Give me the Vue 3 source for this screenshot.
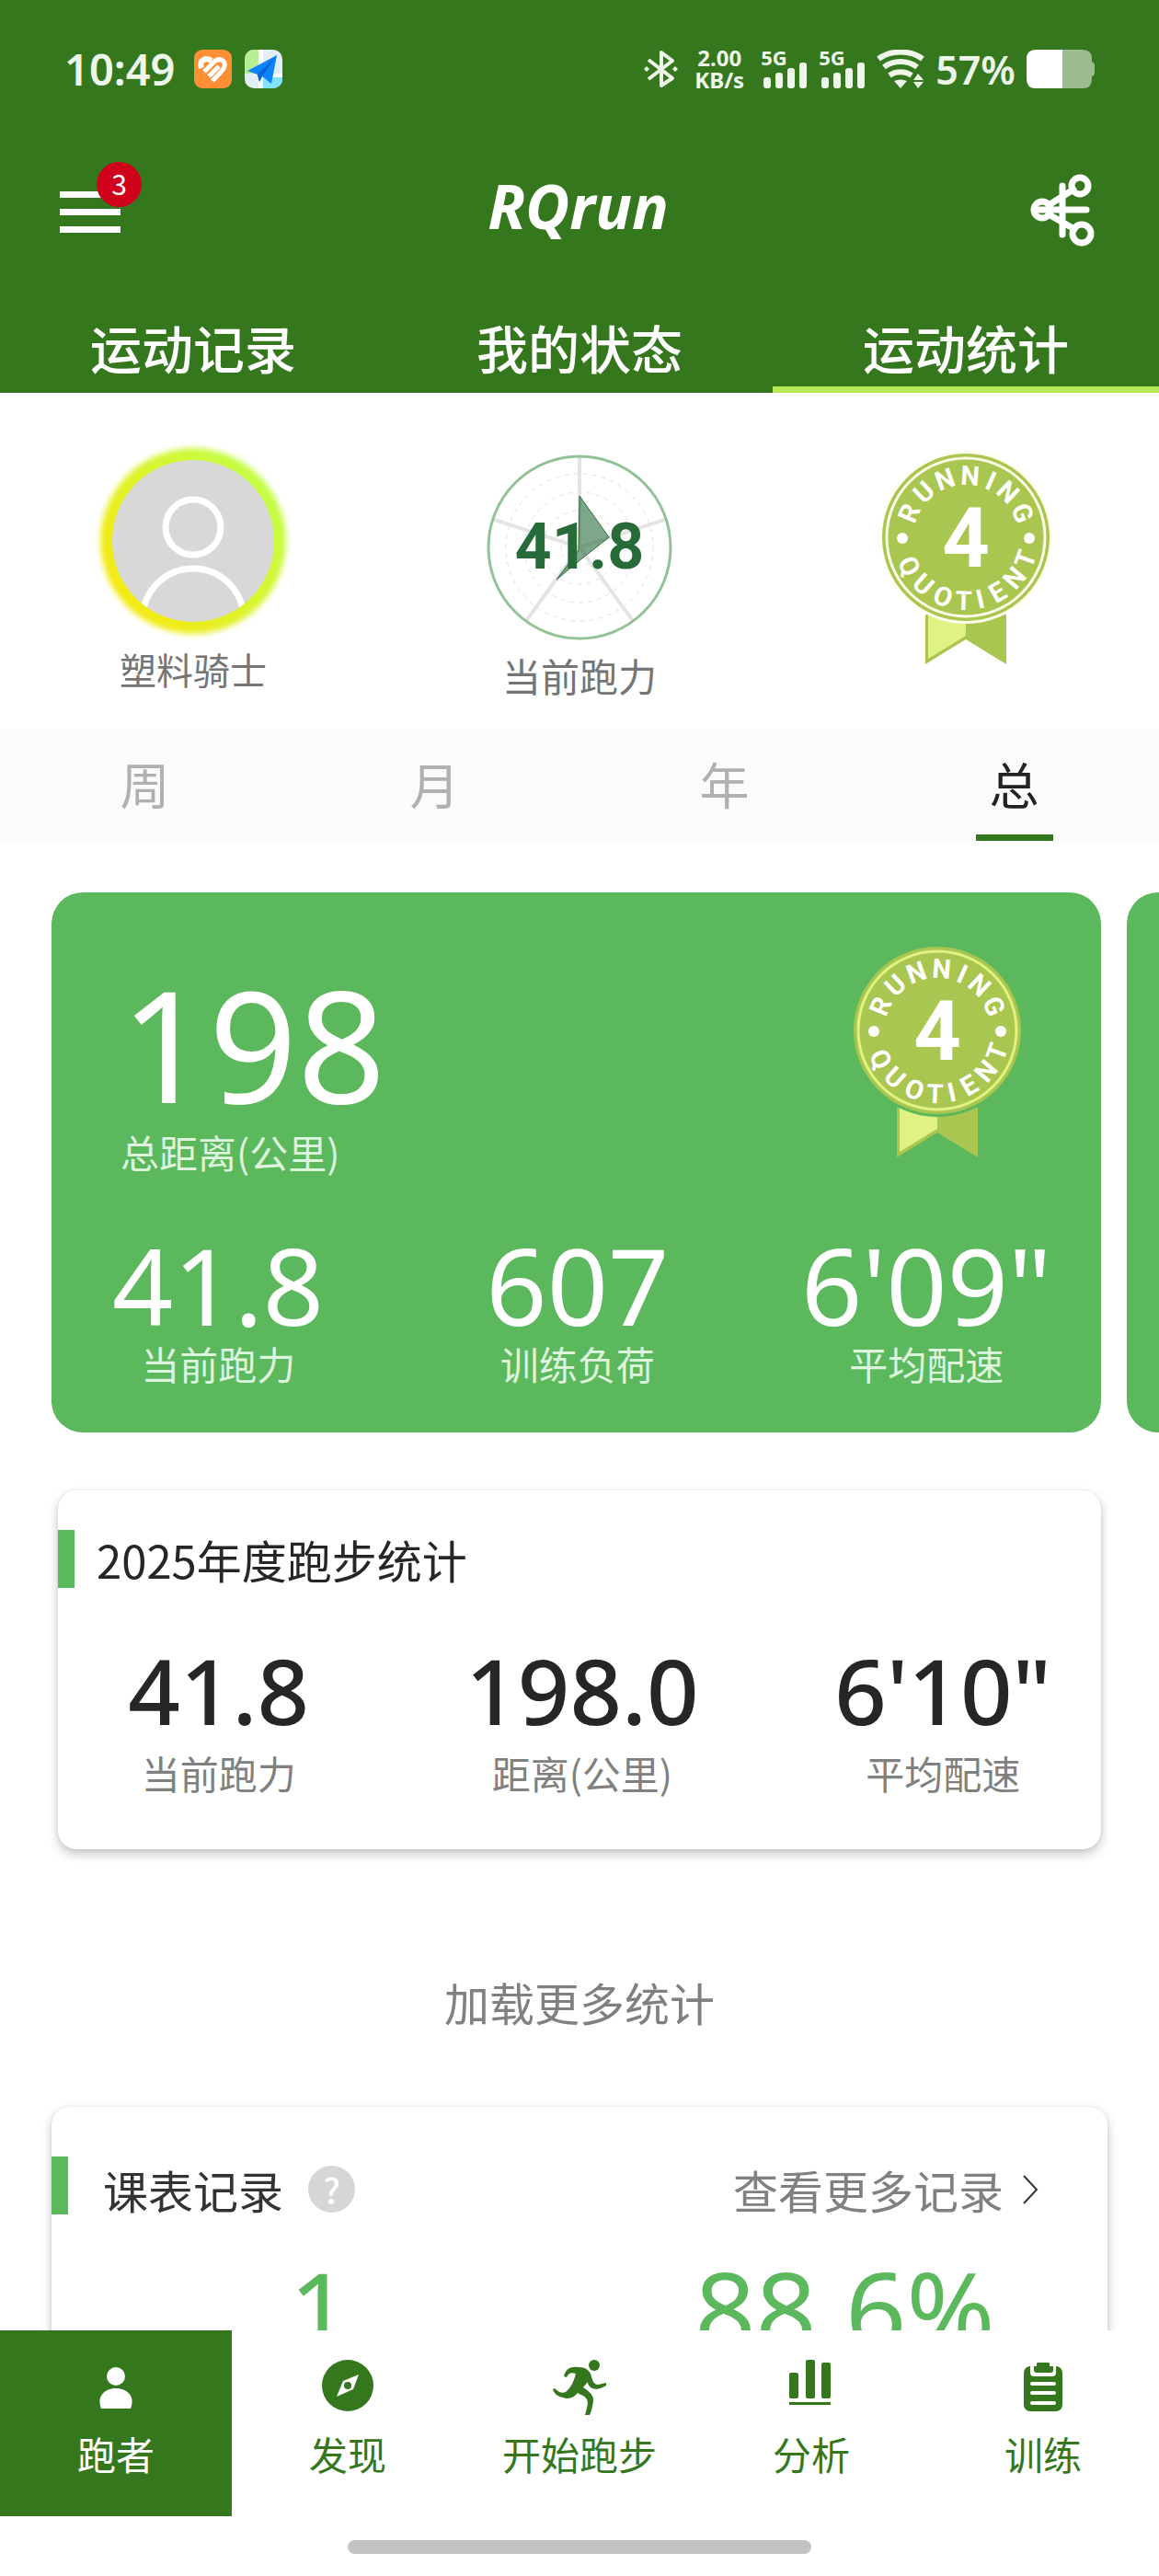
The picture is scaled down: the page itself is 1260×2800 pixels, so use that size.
<template>
  <div class="app">
    <header class="header">
      <div class="status-bar">
        <span class="clock">10:49</span>
        <svg class="app-icon" width="41" height="42" viewBox="0 0 41 42">
          <rect width="41" height="42" rx="9" fill="#ff8f34" />
          <g fill="none" stroke="#fff" stroke-width="5" stroke-linecap="butt">
            <path d="M8 20C5 11 13 8 19 12" stroke-width="6" />
            <path d="M11 24L22 13C27 8 35 12 33 18C32 23 25 28 20 34" />
            <path d="M16 29L27 18" />
          </g>
        </svg>
        <svg class="app-icon" width="41" height="42" viewBox="0 0 41 42">
          <clipPath id="mapClip"><rect width="41" height="42" rx="10" /></clipPath>
          <g clip-path="url(#mapClip)">
            <rect width="41" height="42" fill="#e1eef2" />
            <rect width="15" height="26" fill="#b8ee92" />
            <rect x="20" y="30" width="21" height="12" fill="#83e2fb" />
            <path d="M15 0h5v42h-5zM20 26h21v4H20z" fill="#fff" />
            <path d="M3 23L35 6L29 37L19 29L16 35L14 27Z" fill="#0b84fb" />
            <path d="M14 27L35 6L19 29L16 35Z" fill="#0863d6" />
          </g>
        </svg>
        <div class="status-right">
          <svg width="37" height="42" viewBox="0 0 37 42">
            <path d="M5 11L31 31L19 39V3L31 12L5 32" fill="none" stroke="#eef6ea" stroke-width="4" stroke-linejoin="round" />
            <path d="M3 18l3 3l-3 3l-3 -3zM34 18l3 3l-3 3l-3 -3z" fill="#eef6ea" />
          </svg>
          <div class="speed"><span>2.00</span><span>KB/s</span></div>
          <div v-for="n in 2" :key="n" class="signal">
            <span>5G</span>
            <svg width="48" height="28" viewBox="0 0 48 28" fill="#eef6ea">
              <rect x="0" y="16" width="8" height="12" rx="3" />
              <rect x="13" y="11" width="8" height="17" rx="3" />
              <rect x="26" y="6" width="8" height="22" rx="3" />
              <rect x="39" y="0" width="8" height="28" rx="3" />
            </svg>
          </div>
          <svg width="52" height="42" viewBox="0 0 52 42">
            <g fill="none" stroke="#eef6ea" stroke-width="6">
              <path d="M2 10C15 0 37 0 50 10" />
              <path d="M8 19C18 11 34 11 44 19" />
              <path d="M14 28C21 23 31 23 38 28" />
            </g>
            <path d="M19 34Q26 31 33 34L26 42ZM40 33L45 26L51 33ZM40 35H51L45 42Z" fill="#eef6ea" />
          </svg>
          <span class="percent">57%</span>
          <svg width="74" height="42" viewBox="0 0 74 42">
            <path d="M39 0H61Q71 0 71 10V13Q74 14 74 17V25Q74 28 71 29V32Q71 42 61 42H39Z" fill="#9dbd90" />
            <path d="M10 0H39V42H10Q0 42 0 32V10Q0 0 10 0Z" fill="#fff" />
          </svg>
        </div>
      </div>

      <div class="title-bar">
        <button class="menu" aria-label="菜单">
          <i></i><i></i><i></i>
          <span class="badge">3</span>
        </button>
        <h1>RQrun</h1>
        <button class="share" aria-label="分享">
          <svg width="74" height="82" viewBox="1118 192 74 82" fill="none" stroke="#fff" stroke-width="7" stroke-linecap="round">
            <circle cx="1133" cy="231" r="9" />
            <circle cx="1174" cy="205" r="9" />
            <circle cx="1176" cy="257" r="10" />
            <path d="M1155 205V258M1126 231H1181M1140 226L1167 209M1140 236L1168 252" />
          </svg>
        </button>
      </div>

      <nav class="tabs">
        <button v-for="tab in tabs" :key="tab" :class="{ active: tab === activeTab }" @click="activeTab = tab">{{ tab }}</button>
      </nav>
    </header>

    <main class="content">
      <section class="profile">
        <div class="profile-item">
          <svg class="avatar" width="202" height="202" viewBox="-101 -101 202 202">
            <defs>
              <linearGradient id="glow" x1="1" y1="0.2" x2="0.1" y2="0.9">
                <stop offset="0" stop-color="#beff4a" />
                <stop offset="1" stop-color="#f8e80c" />
              </linearGradient>
              <filter id="soft" x="-20%" y="-20%" width="140%" height="140%">
                <feGaussianBlur stdDeviation="3" />
              </filter>
              <clipPath id="face"><circle r="88" /></clipPath>
            </defs>
            <circle r="101" fill="url(#glow)" filter="url(#soft)" />
            <circle r="88" fill="#d8d8d8" />
            <g clip-path="url(#face)" fill="none" stroke="#fff" stroke-width="7">
              <circle cy="-15" r="30" />
              <circle cy="85" r="55" />
            </g>
          </svg>
          <span class="name">塑料骑士</span>
        </div>
        <div class="profile-item">
          <svg width="204" height="209" viewBox="-102 -108 204 209">
            <circle v-for="r in [20, 40, 60, 80]" :key="r" :r="r" fill="none" stroke="#e0e0e0" stroke-width="1" stroke-dasharray="5 5" />
            <line v-for="a in [0, 72, 144, 216, 288]" :key="a" y2="-99" :transform="`rotate(${a})`" stroke="#e4e4e4" stroke-width="4" />
            <circle r="99" fill="none" stroke="#93c297" stroke-width="3" />
            <text y="23" text-anchor="middle" class="radar-text">41.8</text>
            <path d="M0 -56L32 -11L4 11L-25 35L-1 3Z" fill="#2a6d3b" fill-opacity="0.6" stroke="#2a6d3b" />
          </svg>
          <span class="label">当前跑力</span>
        </div>
        <div class="profile-item">
          <svg class="medal" width="192" height="236" viewBox="-96 -97 192 236">
            <use href="#medalBody" />
          </svg>
        </div>
      </section>

      <nav class="periods">
        <button v-for="p in periods" :key="p" :class="{ active: p === activePeriod }" @click="activePeriod = p">
          <span>{{ p }}</span>
        </button>
      </nav>

      <section class="slider">
        <article class="total-card">
          <div class="total-top">
            <div>
              <div class="total-value">198</div>
              <div class="label">总距离(公里)</div>
            </div>
            <svg class="medal on-green" width="192" height="236" viewBox="-96 -95 192 236">
              <g id="medalBody">
                <path d="M-44 84V138L0 111L44 138V84Z" fill="#a9c650" />
                <path d="M-41 84V132L0 107V84Z" fill="#e0f282" />
                <circle r="94" class="halo" />
                <circle r="91" fill="#a9c650" />
                <circle r="86" fill="none" class="ring" />
                <circle cx="-69" cy="1" r="6" fill="#fff" />
                <circle cx="69" cy="1" r="6" fill="#fff" />
                <text v-for="(l, i) in topLetters" :key="'t' + i" :transform="`rotate(${l[1]})`" y="-57" class="arc-letter">{{ l[0] }}</text>
                <text v-for="(l, i) in bottomLetters" :key="'b' + i" :transform="`rotate(${-l[1]})`" y="79" class="arc-letter">{{ l[0] }}</text>
                <text y="32" class="medal-number">4</text>
              </g>
            </svg>
          </div>
          <div class="stats">
            <div v-for="s in totalStats" :key="s.label" class="stat">
              <div class="value">{{ s.value }}</div>
              <div class="label">{{ s.label }}</div>
            </div>
          </div>
        </article>
        <article class="total-card next"></article>
      </section>

      <section class="card year-card">
        <div class="card-head"><h2>2025年度跑步统计</h2></div>
        <div class="stats">
          <div v-for="s in yearStats" :key="s.label" class="stat">
            <div class="value">{{ s.value }}</div>
            <div class="label">{{ s.label }}</div>
          </div>
        </div>
      </section>

      <button class="load-more">加载更多统计</button>

      <section class="card plan-card">
        <div class="card-head">
          <h2>课表记录</h2>
          <button class="help" aria-label="帮助">?</button>
          <a href="#" class="more">
            查看更多记录
            <svg width="18" height="32" viewBox="0 0 18 32"><path d="M2 1L16 16L2 31" fill="none" stroke="#333" stroke-width="2" /></svg>
          </a>
        </div>
        <div class="plan-stats">
          <span>1</span>
          <span>88.6%</span>
        </div>
      </section>
    </main>

    <nav class="bottom-nav">
      <button class="active">
        <svg width="60" height="60" viewBox="0 0 60 60" fill="currentColor">
          <circle cx="30" cy="18" r="10" />
          <path d="M14 53C8 38 20 31 30 31C40 31 52 38 46 53Z" />
        </svg>
        跑者
      </button>
      <button>
        <svg width="60" height="60" viewBox="0 0 60 60" fill="currentColor">
          <circle cx="30" cy="28" r="28" />
          <path d="M42 16L36 32L18 40L25 23Z" fill="#fff" />
          <circle cx="30" cy="28" r="4" />
        </svg>
        发现
      </button>
      <button>
        <svg width="60" height="60" viewBox="0 0 60 60" fill="currentColor">
          <circle cx="46" cy="6" r="6" />
          <path d="M13 18C15 9 21 7 29 8C38 8 42 13 43 18C44 23 46 27 50 27L59 25V28C54 31 48 33 44 31C40 29 39 26 39 24L34 30C42 35 46 40 45 45C44 51 43 56 41 60H36C38 53 40 47 38 43C36 39 31 38 28 36C23 42 18 43 12 41C6 40 2 36 1 32L3 31C7 35 11 37 15 35C21 30 24 23 26 15C20 13 18 15 16 19Z" />
        </svg>
        开始跑步
      </button>
      <button>
        <svg width="60" height="60" viewBox="0 0 60 60" fill="currentColor">
          <rect x="6" y="14" width="10" height="28" rx="2" />
          <rect x="24" y="0" width="10" height="42" rx="2" />
          <rect x="41" y="3" width="10" height="39" rx="2" />
          <rect x="6" y="46" width="45" height="3" />
        </svg>
        分析
      </button>
      <button>
        <svg width="60" height="60" viewBox="0 0 60 60" fill="currentColor">
          <rect x="9" y="7" width="42" height="49" rx="7" />
          <path d="M16 6H44V14Q44 18 40 18H20Q16 18 16 14Z" fill="#fff" />
          <path d="M23 4Q23 3 25 3H35Q37 3 37 4V7H41V11Q41 14 38 14H23Q20 14 20 11V7H23Z" />
          <path d="M18 26H42M18 36H42M18 47H42" stroke="#fff" stroke-width="4" stroke-linecap="round" />
        </svg>
        训练
      </button>
    </nav>
    <div class="gesture"><i></i></div>
  </div>
</template>

<script setup>
import { ref } from 'vue'

const tabs = ['运动记录', '我的状态', '运动统计']
const activeTab = ref('运动统计')

const periods = ['周', '月', '年', '总']
const activePeriod = ref('总')

const totalStats = [
  { value: '41.8', label: '当前跑力' },
  { value: '607', label: '训练负荷' },
  { value: '6\'09"', label: '平均配速' }
]

const yearStats = [
  { value: '41.8', label: '当前跑力' },
  { value: '198.0', label: '距离(公里)' },
  { value: '6\'10"', label: '平均配速' }
]

// 奖牌文字：[字母, 角度]
const topLetters = [['R', -67], ['U', -43], ['N', -20], ['N', 4], ['I', 24], ['N', 43], ['G', 67]]
const bottomLetters = [['Q', -63], ['U', -42], ['O', -21], ['T', -2], ['I', 13], ['E', 30], ['N', 50], ['T', 70]]
</script>

<style>
body {
  margin: 0;
  background: #fff;
}
</style>

<style scoped>
.app {
  display: flex;
  flex-direction: column;
  height: 100vh;
  background: #fff;
  color: #262626;
  font-family: "Noto Sans CJK SC", sans-serif;
}

button {
  padding: 0;
  border: none;
  background: none;
  color: inherit;
  font: inherit;
  cursor: pointer;
}

h1,
h2 {
  margin: 0;
}

svg {
  display: block;
  flex: none;
}

.header {
  background: #35771d;
  color: #fff;
}

/* 状态栏 */
.status-bar {
  display: flex;
  align-items: center;
  height: 42px;
  padding: 54px 70px;
  color: #eef6ea;
  font-family: "Noto Sans", sans-serif;
  font-weight: 600;
}

.clock {
  margin-right: 6px;
  font-size: 47px;
}

.app-icon {
  margin-left: 14px;
}

.status-right {
  display: flex;
  align-items: center;
  gap: 12px;
  margin-left: auto;
}

.speed {
  display: flex;
  flex-direction: column;
  align-items: center;
  padding: 0 6px;
  font-size: 24px;
  font-weight: 700;
  line-height: 24px;
}

.signal {
  position: relative;
  display: flex;
  align-items: flex-end;
  justify-content: flex-end;
  width: 51px;
  height: 42px;
}

.signal span {
  position: absolute;
  top: -4px;
  left: 0;
  font-size: 22px;
  font-weight: 700;
  line-height: 24px;
}

.percent {
  font-size: 43px;
}

/* 标题栏 */
.title-bar {
  display: grid;
  grid-template-columns: 1fr auto 1fr;
  align-items: center;
  height: 160px;
  padding: 0 68px 0 65px;
}

.menu {
  position: relative;
  display: flex;
  flex-direction: column;
  gap: 12px;
  width: 66px;
}

.menu i {
  height: 7px;
  background: #fff;
}

.badge {
  position: absolute;
  top: -32px;
  left: 40px;
  width: 49px;
  height: 49px;
  border-radius: 50%;
  background: #d0021b;
  font-size: 30px;
  line-height: 47px;
}

.title-bar h1 {
  padding-bottom: 14px;
  font-family: "Noto Sans", sans-serif;
  font-size: 66px;
  font-style: italic;
  font-weight: 700;
  line-height: 80px;
}

.share {
  justify-self: end;
}

.tabs {
  display: flex;
}

.tabs button {
  flex: 1;
  padding: 37px 0 13px;
  border-bottom: 7px solid transparent;
  font-size: 56px;
  font-weight: 500;
  line-height: 60px;
}

.tabs .active {
  border-color: #b6e757;
}

.content {
  flex: 1;
  min-height: 0;
  overflow: hidden;
}

/* 个人信息 */
.profile {
  display: flex;
  box-sizing: border-box;
  height: 365px;
  padding-top: 60px;
}

.profile-item {
  display: flex;
  flex: 1;
  flex-direction: column;
  align-items: center;
  gap: 8px;
}

.avatar {
  overflow: visible;
}

.name {
  color: #757575;
  font-size: 40px;
  line-height: 60px;
}

.label {
  font-size: 42px;
  line-height: 52px;
}

.profile .label {
  color: #757575;
  line-height: 60px;
}

.radar-text {
  fill: #276b39;
  font-family: Roboto, sans-serif;
  font-size: 70px;
  font-weight: 700;
}

.medal {
  --halo: #fffff0;
  --ring: #fcfde6;
}

.medal.on-green {
  --halo: #5cb85c;
  --ring: #e0f282;
}

.halo {
  fill: var(--halo);
}

.ring {
  stroke: var(--ring);
  stroke-width: 3px;
}

.arc-letter {
  fill: #fff;
  font-family: Roboto, sans-serif;
  font-size: 29px;
  font-weight: 700;
  text-anchor: middle;
}

.medal-number {
  fill: #fff;
  font-family: Roboto, sans-serif;
  font-size: 90px;
  font-weight: 700;
  text-anchor: middle;
}

/* 周期切换 */
.periods {
  display: flex;
  background: #fbfbfb;
}

.periods button {
  flex: 1;
  color: #b0b0b0;
  font-size: 54px;
  line-height: 60px;
}

.periods span {
  display: inline-block;
  box-sizing: border-box;
  width: 84px;
  height: 122px;
  padding-top: 30px;
  border-bottom: 7px solid transparent;
}

.periods .active {
  color: #222;
}

.periods .active span {
  border-color: #35771d;
}

/* 总计卡片 */
.slider {
  display: flex;
  gap: 28px;
  padding: 56px 0 0 56px;
  overflow: hidden;
}

.total-card {
  flex: none;
  box-sizing: border-box;
  width: calc(100% - 63px);
  padding: 55px 0 49px;
  border-radius: 34px;
  background: #5cb85c;
  color: #fff;
}

.total-top {
  display: flex;
  justify-content: space-between;
  margin-bottom: 56px;
  padding: 0 82px 0 75px;
}

.total-value {
  margin-top: 19px;
  font-family: "Noto Sans", sans-serif;
  font-size: 168px;
  line-height: 180px;
}

.total-card .label {
  color: #ddf4dd;
}

.total-top .label {
  line-height: 56px;
}

.stats {
  display: grid;
  grid-template-columns: 61fr 77fr 60fr;
  text-align: center;
}

.total-card .stats {
  grid-template-columns: 32fr 37fr 30fr;
  padding-right: 20px;
}

.value {
  font-family: "Noto Sans", sans-serif;
  white-space: nowrap;
}

.total-card .value {
  font-size: 116px;
  line-height: 120px;
}

/* 白色卡片 */
.card {
  border-radius: 20px;
  background: #fff;
  box-shadow: 0 5px 12px rgba(0, 0, 0, 0.24), 0 0 3px rgba(0, 0, 0, 0.08);
}

.card-head {
  display: flex;
  align-items: center;
  height: 63px;
  border-left: 18px solid #5cb85c;
}

.card h2 {
  font-size: 49px;
  font-weight: 400;
}

.year-card {
  margin: 63px 63px 0;
  padding: 43px 0 57px;
}

.year-card h2 {
  margin-left: 24px;
}

.year-card .stats {
  margin-top: 56px;
}

.year-card .value {
  margin-bottom: 9px;
  font-size: 99px;
  font-weight: 500;
  line-height: 110px;
}

.year-card .label {
  color: #808080;
}

.load-more {
  display: block;
  margin: 136px auto 84px;
  color: #808080;
  font-size: 49px;
  line-height: 60px;
}

.plan-card {
  margin: 0 56px;
  padding: 54px 0;
}

.plan-card h2,
.plan-card .help,
.plan-card .more {
  margin-top: 8px;
}

.plan-card h2 {
  margin-left: 38px;
  color: #333;
}

.help {
  width: 51px;
  height: 51px;
  margin-left: 27px;
  border-radius: 50%;
  background: #d6d6d6;
  color: #fff;
  font-size: 38px;
  font-weight: 500;
  line-height: 51px;
}

.more {
  display: flex;
  align-items: center;
  gap: 20px;
  margin-left: auto;
  padding-right: 75px;
  color: #808080;
  font-size: 49px;
  text-decoration: none;
}

.plan-stats {
  display: grid;
  grid-template-columns: 1fr 1fr;
  margin-top: 42px;
  padding-left: 6px;
  color: #5cb85c;
  font-family: "Noto Sans", sans-serif;
  font-size: 116px;
  line-height: 120px;
  text-align: center;
}

/* 底部导航 */
.bottom-nav {
  display: flex;
  background: #fff;
  color: #35771d;
}

.bottom-nav button {
  display: flex;
  flex: 1;
  flex-direction: column;
  align-items: center;
  gap: 16px;
  padding: 32px 0 42px;
  font-size: 42px;
  line-height: 52px;
}

.bottom-nav .active {
  background: #35771d;
  color: #fff;
}

.gesture {
  padding: 26px 0 24px;
  background: #fff;
}

.gesture i {
  display: block;
  width: 40%;
  height: 15px;
  margin: 0 auto;
  border-radius: 8px;
  background: #c2c2c2;
}
</style>
